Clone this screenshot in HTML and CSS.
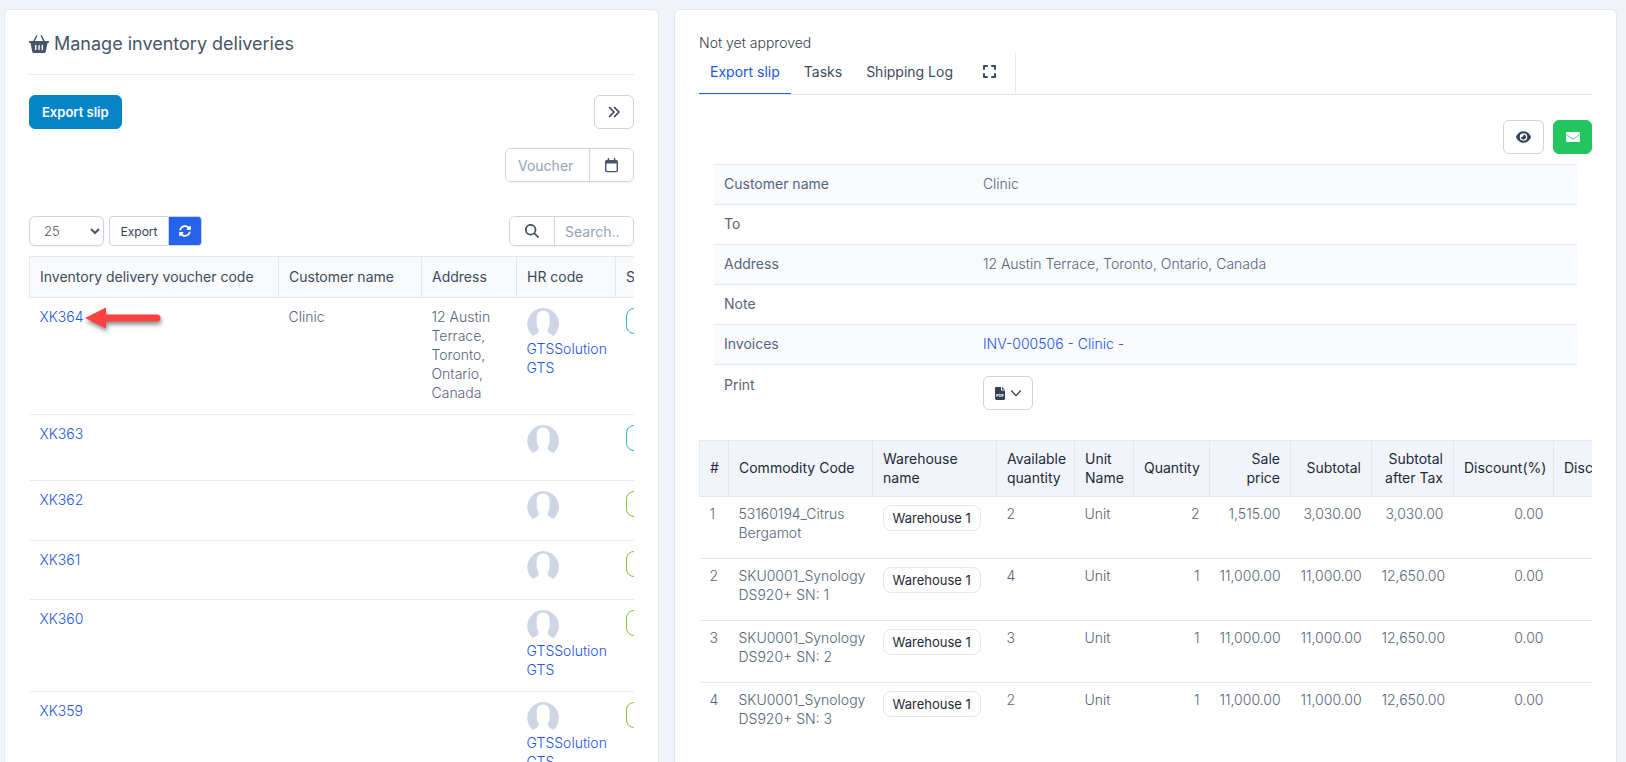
FILE: index.html
```html
<!DOCTYPE html>
<html lang="en">
<head>
<meta charset="utf-8">
<title>Manage inventory deliveries</title>
<link rel="stylesheet" href="styles.css">
</head>
<body>
<svg class="sprite" aria-hidden="true">
  <symbol id="avatar" viewBox="0 0 32 32">
    <path fill="#ced6e6" d="M16 0a16 16 0 0 1 10.600 27.980l-4.400-2.480c-1.200-1-2-2.300-1.200-4.400 1.200-2.200 1.700-4 1.700-6.100V9.500c0-4-2.500-6.900-6.500-6.900S9.700 5.500 9.700 9.500V15c0 2.200.5 4 1.600 6.100.9 2.100.2 3.500-1.200 4.400L5.700 28A16 16 0 0 1 16 0z"/>
  </symbol>
</svg>
<main class="page">
  <section class="panel">
    <h1 class="title">
      <svg class="basket" viewBox="0 0 20 18" aria-hidden="true"><g fill="none" stroke="currentColor" stroke-width="1.500" stroke-linecap="round"><path d="M7.600 1 4.800 6.500M12.400 1l2.800 5.500"/></g><path fill="currentColor" fill-rule="evenodd" d="M1 6h18a.9.9 0 0 1 .2 1.900l-.8.300-1.600 8.200a2 2 0 0 1-2 1.600H5.200a2 2 0 0 1-2-1.600L1.600 8.200.8 7.900A.9.900 0 0 1 1 6zm5 4.500v4a.7.700 0 0 0 1.400 0v-4a.7.700 0 0 0-1.400 0zm3.300 0v4a.7.700 0 0 0 1.400 0v-4a.7.700 0 0 0-1.400 0zm3.300 0v4a.7.700 0 0 0 1.400 0v-4a.7.700 0 0 0-1.400 0z"/></svg>
      Manage inventory deliveries
    </h1>
    <div class="bar">
      <button class="btn btn-primary" type="button">Export slip</button>
      <button class="btn btn-toggle" type="button" aria-label="Expand list"><svg width="12" height="12" viewBox="0 0 12 12" fill="none" stroke="currentColor" stroke-width="1.600" stroke-linecap="round" stroke-linejoin="round"><path d="M1.500 1.500 6 6l-4.500 4.500M6.500 1.500 11 6l-4.500 4.500"/></svg></button>
    </div>
    <div class="bar bar-end">
      <div class="group group-date">
        <input class="field" type="text" placeholder="Voucher date" aria-label="Voucher date">
        <button class="addon" type="button" aria-label="Pick a date"><svg width="13" height="15" viewBox="0 0 13 15"><path fill="currentColor" fill-rule="evenodd" d="M2.600.8a.7.700 0 0 1 1.600 0V2h4.600V.8a.7.700 0 0 1 1.600 0V2h.8A1.800 1.800 0 0 1 13 3.800v8.700a1.800 1.800 0 0 1-1.800 1.800H1.800A1.800 1.800 0 0 1 0 12.500V3.800A1.800 1.800 0 0 1 1.800 2h.8zM1.400 5.500v7c0 .2.200.4.400.4h9.400c.2 0 .4-.2.400-.4v-7z"/></svg></button>
      </div>
    </div>
    <div class="bar bar-table">
      <div class="tools">
        <select class="length" aria-label="Rows per page"><option>25</option><option>50</option></select>
        <div class="split">
          <button class="split-export" type="button">Export</button>
          <button class="split-reload" type="button" aria-label="Reload"><svg width="12" height="12" viewBox="0 0 512 512"><path fill="currentColor" d="M370.720 133.280C339.458 104.008 298.888 87.962 255.848 88c-77.458.068-144.328 53.178-162.791 126.850-1.344 5.363-6.122 9.150-11.651 9.150H24.103c-7.498 0-13.194-6.807-11.807-14.176C33.933 94.924 134.813 8 256 8c66.448 0 126.791 26.136 171.315 68.685L463.030 40.970C478.149 25.851 504 36.559 504 57.941V192c0 13.255-10.745 24-24 24H345.941c-21.382 0-32.090-25.851-16.971-40.971l41.750-41.749zM32 296h134.059c21.382 0 32.090 25.851 16.971 40.971l-41.750 41.750c31.262 29.273 71.835 45.319 114.876 45.280 77.418-.070 144.315-53.144 162.787-126.849 1.344-5.363 6.122-9.150 11.651-9.150h57.304c7.498 0 13.194 6.807 11.807 14.176C478.067 417.076 377.187 504 256 504c-66.448 0-126.791-26.136-171.315-68.685L48.970 471.030C33.851 486.149 8 475.441 8 454.059V320c0-13.255 10.745-24 24-24z"/></svg></button>
        </div>
      </div>
      <div class="group group-search">
        <span class="addon"><svg width="14" height="14" viewBox="0 0 512 512"><path fill="currentColor" d="M416 208c0 45.900-14.900 88.300-40 122.700L502.600 457.400c12.500 12.500 12.500 32.800 0 45.300s-32.800 12.500-45.300 0L330.700 376c-34.400 25.200-76.800 40-122.700 40C93.100 416 0 322.900 0 208S93.100 0 208 0S416 93.100 416 208zM208 352a144 144 0 1 0 0-288 144 144 0 1 0 0 288z"/></svg></span>
        <input class="field" type="search" placeholder="Search.." aria-label="Search">
      </div>
    </div>
    <div class="scroll">
      <table class="deliveries">
        <colgroup><col class="w-code"><col class="w-customer"><col class="w-address"><col class="w-hr"><col class="w-status"></colgroup>
        <thead><tr><th>Inventory delivery voucher code</th><th>Customer name</th><th>Address</th><th>HR code</th><th>Status</th></tr></thead>
        <tbody>
          <tr>
            <td><span class="marked"><a href="#">XK364</a><svg class="arrow" width="84" height="32" viewBox="0 0 84 32" aria-hidden="true"><path fill="#fd4141" d="M3 14 24 3.500V10.500H75a3.500 3.500 0 0 1 0 7H24V24.500z"/></svg></span></td>
            <td>Clinic</td><td>12 Austin Terrace, Toronto, Ontario, Canada</td>
            <td><svg class="avatar"><use href="#avatar"/></svg><a href="#">GTSSolution GTS</a></td><td><span class="pill pill-info"></span></td>
          </tr>
          <tr class="tall"><td><a href="#">XK363</a></td><td></td><td></td><td><svg class="avatar"><use href="#avatar"/></svg></td><td><span class="pill pill-info"></span></td></tr>
          <tr class="mid"><td><a href="#">XK362</a></td><td></td><td></td><td><svg class="avatar"><use href="#avatar"/></svg></td><td><span class="pill pill-done"></span></td></tr>
          <tr class="short"><td><a href="#">XK361</a></td><td></td><td></td><td><svg class="avatar"><use href="#avatar"/></svg></td><td><span class="pill pill-done"></span></td></tr>
          <tr><td><a href="#">XK360</a></td><td></td><td></td><td><svg class="avatar"><use href="#avatar"/></svg><a href="#">GTSSolution GTS</a></td><td><span class="pill pill-done"></span></td></tr>
          <tr><td><a href="#">XK359</a></td><td></td><td></td><td><svg class="avatar"><use href="#avatar"/></svg><a href="#">GTSSolution GTS</a></td><td><span class="pill pill-done"></span></td></tr>
        </tbody>
      </table>
    </div>
  </section>

  <section class="panel">
    <p class="state">Not yet approved</p>
    <nav class="tabs">
      <a class="tab active" href="#">Export slip</a>
      <a class="tab" href="#">Tasks</a>
      <a class="tab" href="#">Shipping Log</a>
      <a class="tab tab-icon" href="#" aria-label="Full view"><svg width="13" height="13" viewBox="0 0 13 13" fill="none" stroke="currentColor" stroke-width="2" stroke-linecap="round" stroke-linejoin="round"><path d="M1 4V1h3M9 1h3v3M12 9v3H9M4 12H1V9"/></svg></a>
    </nav>
    <div class="actions">
      <button class="btn btn-view" type="button" aria-label="View"><svg width="15" height="14" viewBox="0 0 576 512"><path fill="currentColor" d="M288 32c-80.800 0-145.500 36.800-192.600 80.600C48.600 156 17.300 208 2.500 243.700c-3.300 7.900-3.300 16.700 0 24.600C17.300 304 48.600 356 95.400 399.400C142.500 443.200 207.200 480 288 480s145.500-36.800 192.600-80.600c46.800-43.500 78.100-95.400 93-131.100c3.300-7.900 3.300-16.700 0-24.600c-14.900-35.700-46.200-87.700-93-131.100C433.500 68.800 368.800 32 288 32zM144 256a144 144 0 1 1 288 0 144 144 0 1 1 -288 0zm144-64c0 35.300-28.700 64-64 64c-7.100 0-13.900-1.200-20.300-3.300c-5.500-1.800-11.900 1.600-11.700 7.400c.3 6.900 1.300 13.800 3.200 20.700c13.700 51.200 66.400 81.600 117.600 67.900s81.600-66.400 67.900-117.600c-11.100-41.500-47.800-69.400-88.600-71.100c-5.800-.2-9.200 6.100-7.400 11.700c2.100 6.400 3.300 13.200 3.300 20.300z"/></svg></button>
      <button class="btn btn-mail" type="button" aria-label="Send by email"><svg width="14" height="10" viewBox="0 0 14 10"><rect width="14" height="10" rx="1" fill="#fff"/><path d="M0 2.200 5.900 6.600a1.800 1.800 0 0 0 2.200 0L14 2.200" fill="none" stroke="#22c55e" stroke-width=".8"/></svg></button>
    </div>
    <table class="info">
      <tbody>
        <tr><th scope="row">Customer name</th><td>Clinic</td></tr>
        <tr><th scope="row">To</th><td></td></tr>
        <tr><th scope="row">Address</th><td>12 Austin Terrace, Toronto, Ontario, Canada</td></tr>
        <tr><th scope="row">Note</th><td></td></tr>
        <tr><th scope="row">Invoices</th><td><a href="#">INV-000506 - Clinic -</a></td></tr>
        <tr class="print"><th scope="row">Print</th><td><button class="btn btn-print" type="button" aria-label="Print PDF"><svg width="10" height="13" viewBox="0 0 10 13"><path fill="currentColor" d="M1.400 0H6v3.400h4v8.200a1.400 1.400 0 0 1-1.400 1.400H1.400A1.400 1.400 0 0 1 0 11.600V1.400A1.400 1.400 0 0 1 1.400 0zM7 0l3 2.600H7z"/><text x="5" y="10" text-anchor="middle" class="pdf">PDF</text></svg><svg width="10" height="7" viewBox="0 0 10 7" fill="none" stroke="currentColor" stroke-width="1.300" stroke-linecap="round" stroke-linejoin="round"><path d="M.7 1 5 5.600 9.300 1"/></svg></button></td></tr>
      </tbody>
    </table>
    <div class="scroll">
      <table class="items">
        <colgroup><col class="c-no"><col class="c-code"><col class="c-wh"><col class="c-avail"><col class="c-unit"><col class="c-qty"><col class="c-price"><col class="c-sub"><col class="c-tax"><col class="c-disc"><col class="c-money"></colgroup>
        <thead><tr><th>#</th><th>Commodity Code</th><th>Warehouse name</th><th>Available quantity</th><th>Unit Name</th><th class="num">Quantity</th><th class="num">Sale price</th><th class="num">Subtotal</th><th class="num">Subtotal after Tax</th><th class="num">Discount(%)</th><th class="nowrap">Discount(money)</th></tr></thead>
        <tbody>
          <tr><td>1</td><td>53160194_Citrus Bergamot</td><td><span class="tag">Warehouse 1</span></td><td>2</td><td>Unit</td><td class="num">2</td><td class="num">1,515.00</td><td class="num">3,030.00</td><td class="num">3,030.00</td><td class="num">0.00</td><td></td></tr>
          <tr><td>2</td><td>SKU0001_Synology DS920+ SN: 1</td><td><span class="tag">Warehouse 1</span></td><td>4</td><td>Unit</td><td class="num">1</td><td class="num">11,000.00</td><td class="num">11,000.00</td><td class="num">12,650.00</td><td class="num">0.00</td><td></td></tr>
          <tr><td>3</td><td>SKU0001_Synology DS920+ SN: 2</td><td><span class="tag">Warehouse 1</span></td><td>3</td><td>Unit</td><td class="num">1</td><td class="num">11,000.00</td><td class="num">11,000.00</td><td class="num">12,650.00</td><td class="num">0.00</td><td></td></tr>
          <tr><td>4</td><td>SKU0001_Synology DS920+ SN: 3</td><td><span class="tag">Warehouse 1</span></td><td>2</td><td>Unit</td><td class="num">1</td><td class="num">11,000.00</td><td class="num">11,000.00</td><td class="num">12,650.00</td><td class="num">0.00</td><td></td></tr>
        </tbody>
      </table>
    </div>
  </section>
</main>
</body>
</html>
```
FILE: styles.css
```css
*, *::before, *::after { box-sizing: border-box; }
html { overflow: hidden; }
body {
  margin: 0;
  background: #f0f4f9;
  color: #566579;
  font: 300 14px/19px Inter, "Liberation Sans", sans-serif;
}
button, input, select { font: inherit; margin: 0; }
a { color: #1d55e6; text-decoration: none; }
svg { display: block; flex: none; }
.sprite { position: absolute; width: 0; height: 0; }

.page {
  display: grid;
  grid-template-columns: minmax(0, 655fr) minmax(0, 943fr);
  gap: 15px;
  height: 100vh;
  padding: 9px 9px 0 4px;
}
.panel {
  overflow: hidden;
  padding: 24px;
  background: #fff;
  border: 1px solid #e2e8f0;
  border-bottom: 0;
  border-radius: 6px 6px 0 0;
}

.title {
  display: flex;
  align-items: center;
  gap: 5px;
  margin: 0 0 20px;
  padding-bottom: 20px;
  border-bottom: 1px solid #e9ebee;
  color: #475569;
  font-size: 18px;
  font-weight: 400;
  line-height: 20px;
}
.basket { width: 20px; height: 18px; }

.bar { display: flex; justify-content: space-between; }
.bar-end { justify-content: flex-end; margin-top: 19px; }
.bar-table { margin: 34px 0 10px; }
.btn {
  display: inline-flex;
  align-items: center;
  justify-content: center;
  height: 34px;
  padding: 0 12px;
  background: #fff;
  border: 1px solid #cbd5e1;
  border-radius: 6px;
  color: #334155;
}
.btn-primary { background: #0284c7; border-color: #0284c7; color: #fff; font-size: 13px; font-weight: 600; }
.btn-toggle { width: 40px; }

.group {
  display: flex;
  border: 1px solid #cbd5e1;
  border-radius: 6px;
  box-shadow: 0 1px 2px rgba(0, 0, 0, .05);
  overflow: hidden;
}
.group-date { width: 129px; height: 34px; }
.group-search { width: 125px; height: 30px; }
.field {
  flex: 1;
  min-width: 0;
  padding: 0 12px;
  border: 0;
  background: #fff;
  color: #475569;
  font-weight: 400;
}
.field::placeholder { color: #94a3b8; opacity: 1; }
.group-date .field { padding-right: 14px; }
.group-search .field { padding: 0 0 0 10px; }
.addon {
  display: flex;
  align-items: center;
  justify-content: center;
  width: 44px;
  padding: 0;
  background: #fff;
  border: 0;
  color: #475569;
}
.group-date .addon, .group-search .field { border-left: 1px solid #cbd5e1; }

.tools { display: flex; gap: 5px; }
.length {
  width: 75px;
  height: 30px;
  padding: 0 0 0 10px;
  background: #fff;
  border: 1px solid #cbd5e1;
  border-radius: 6px;
  box-shadow: 0 1px 2px rgba(0, 0, 0, .05);
  color: #555;
  font-size: 13px;
}
.split { display: flex; height: 30px; }
.split button { border: 1px solid #cbd5e1; font-size: 12px; font-weight: 400; }
.split .split-export {
  width: 60px;
  padding: 0;
  background: #fff;
  border-radius: 4px 0 0 4px;
  color: #334155;
}
.split .split-reload {
  display: flex;
  align-items: center;
  justify-content: center;
  width: 33px;
  padding: 0;
  background: #2563eb;
  border-left: 0;
  border-radius: 0 4px 4px 0;
  color: #fff;
}

.scroll { overflow: hidden; }
table { border-collapse: collapse; }
th { font-weight: 400; text-align: left; }
td { vertical-align: top; }

.deliveries { width: 710px; table-layout: fixed; }
.w-code { width: 249px; }
.w-customer { width: 143px; }
.w-address { width: 95px; }
.w-hr { width: 99px; }
.w-status { width: 124px; }
.deliveries th {
  height: 41px;
  padding: 0 10px 2px;
  background: #f8fafc;
  border: 1px solid #e2e8f0;
  color: #3c4a5e;
}
.deliveries td { padding: 9px 10px 12px; border-bottom: 1px solid #e6ebf2; }
.tall td { height: 66px; }
.mid td { height: 60px; }
.short td { height: 59px; }
.avatar { width: 32px; height: 32px; margin: 1px 0 -1px; }
.pill { display: block; width: 90px; height: 26px; margin-top: 1px; border: 1px solid; border-radius: 8px; }
.pill-info { color: #22b8da; }
.pill-done { color: #84c529; }
.marked { position: relative; }
.arrow {
  position: absolute;
  left: 42px;
  top: -4px;
  filter: drop-shadow(1px 3px 2px rgba(0, 0, 0, .45));
}

.state { margin: 0 0 1px; color: #374151; line-height: 18px; }
.tabs { display: flex; gap: 2px; border-bottom: 1px solid #e2e8f0; }
.tab { padding: 9px 11px 12px; border-bottom: 1px solid transparent; color: #3c4a5e; font-weight: 400; }
.tab.active { border-color: #2563eb; color: #1d55e6; }
.tab-icon { padding: 12px 19px 0 17px; border-right: 1px solid #e2e8f0; }
.actions { display: flex; justify-content: flex-end; gap: 9px; margin: 25px 0 10px; }
.btn-view { width: 41px; }
.btn-mail { width: 39px; background: #22c55e; border-color: #22c55e; }

.info { width: calc(100% - 30px); margin: 0 15px 20px; table-layout: fixed; }
.info th { width: 30%; vertical-align: top; }
.info th, .info td { padding: 9px 10px 11px; border-top: 1px solid #e2e8f0; }
.info .print th { padding-top: 10px; }
.info .print td { padding: 11px 10px 10px; }
.info tr:nth-child(odd) { background: #f8fafc; }
.btn-print { gap: 6px; width: 50px; }
.pdf { fill: #fff; font-size: 4px; font-weight: 700; }

.items { width: 960px; table-layout: fixed; }
.c-no { width: 29px; }
.c-code { width: 144px; }
.c-wh { width: 124px; }
.c-avail { width: 78px; }
.c-unit { width: 59px; }
.c-qty { width: 76px; }
.c-price, .c-sub { width: 81px; }
.c-tax { width: 82px; }
.c-disc { width: 100px; }
.c-money { width: 106px; }
.items th {
  height: 56px;
  padding: 0 10px 2px;
  background: #f1f5f9;
  border: 1px solid #e2e8f0;
  color: #1e293b;
}
.items td { height: 62px; padding: 7px 10px; border-bottom: 1px solid #e2e8f0; }
.items tr:last-child td { border-bottom: 0; }
.items .num { text-align: right; }
.items .nowrap { white-space: nowrap; }
.tag {
  display: inline-block;
  margin-top: 1px;
  padding: 3px 9px;
  border: 1px solid #e2e8f0;
  border-radius: 8px;
  color: #1f2937;
  font-size: 13px;
  font-weight: 400;
  line-height: 18px;
}
```
